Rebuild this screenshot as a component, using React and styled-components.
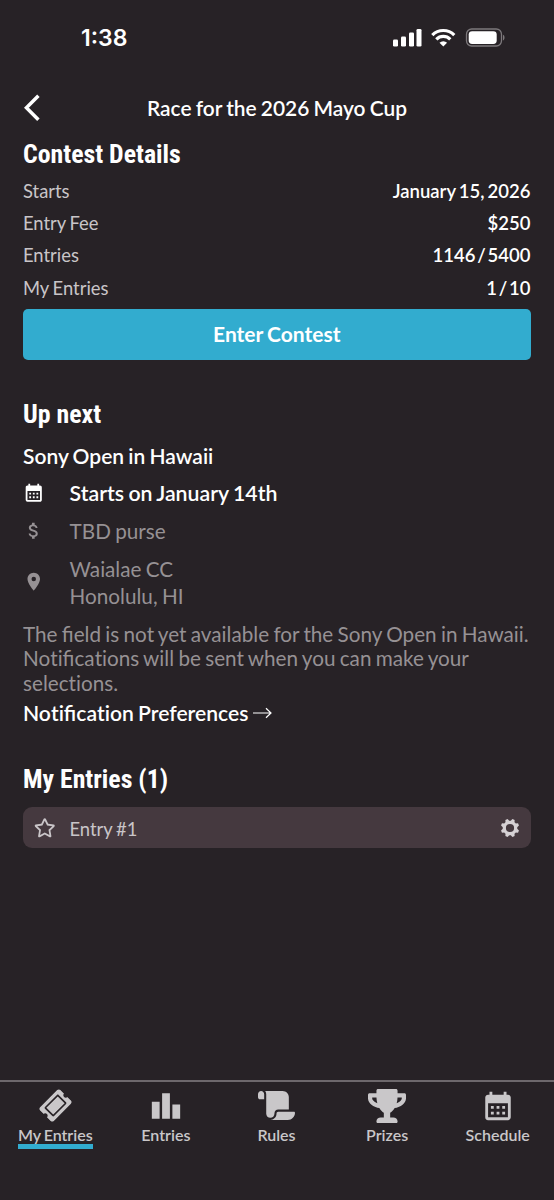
import React from 'react'
import styled, { createGlobalStyle } from 'styled-components'
import { MdCalendarMonth, MdAttachMoney, MdLocationOn, MdLeaderboard } from 'react-icons/md'
import { FaTicketAlt, FaTrophy, FaRegStar } from 'react-icons/fa'
import { FaScroll } from 'react-icons/fa6'

const GlobalStyle = createGlobalStyle`
  * {
    box-sizing: border-box;
  }
  body {
    margin: 0;
    background-color: #272226;
  }
`
const Container = styled.div`
  width: 100%;
  height: 1200px;
  display: flex;
  flex-direction: column;
  overflow: hidden;
  background-color: #272226;
  color: white;
  font-family: Lato, sans-serif;
  font-weight: 600;
  word-spacing: -1px;
`
const StatusBar = styled.div`
  height: 79px;
  padding: 5px 49px 10px 81px;
  display: flex;
  align-items: center;
  justify-content: space-between;
`
const Clock = styled.span`
  padding-top: 2px;
  font-family: Inter, sans-serif;
  font-size: 23px;
  font-weight: 600;
`
const Header = styled.div`
  height: 59px;
  padding: 0px 24px 2px;
  display: grid;
  grid-template-columns: 30px 1fr 30px;
  align-items: center;
`
const Title = styled.span`
  font-size: 20.9px;
  text-align: center;
`
const Content = styled.div`
  flex: 1;
  padding: 0px 23.5px 0px 23px;
`
const Heading = styled.h2`
  height: 32px;
  margin: 0px;
  font-family: Roboto, sans-serif;
  font-size: 25.8px;
  font-weight: 700;
  font-stretch: 75%;
  line-height: 33px;
  word-spacing: 0px;
`
const Detail = styled.div`
  height: 32.2px;
  display: flex;
  align-items: center;
  justify-content: space-between;
  font-size: 18.4px;
`
const Label = styled.span`
  color: #c9c5c8;
  font-weight: 400;
`
const Value = styled.span`
  font-size: 18.5px;
  word-spacing: ${props => props.$tight ? -2.8 : -1.5}px;
`
const Details = styled.div`
  padding-top: 5px;
  margin-bottom: 5px;
`
const Button = styled.button`
  display: block;
  width: 100%;
  height: 51px;
  margin-bottom: 38px;
  padding: 0px 0px 2px;
  border: none;
  border-radius: 5px;
  background-color: #32accf;
  color: white;
  font-family: inherit;
  font-size: 21px;
  font-weight: 700;
  word-spacing: inherit;
`
const EventName = styled.div`
  height: 45px;
  font-size: 21px;
  line-height: 51px;
`
const Info = styled.div`
  height: ${props => props.$tall ? 65 : 38}px;
  display: grid;
  grid-template-columns: 46.6px 1fr;
  align-items: center;
  color: ${props => props.$active ? 'white' : '#969194'};
  font-size: ${props => props.$active ? 21.3 : 20.7}px;
  font-weight: ${props => props.$active ? 600 : 400};
  line-height: 27.4px;
  svg {
    margin-bottom: 2.5px;
  }
`
const Notice = styled.p`
  margin: 6px -10px 0px 0px;
  color: #969194;
  font-size: 20.7px;
  font-weight: 400;
  line-height: 24.6px;
`
const NoLigature = styled.span`
  font-variant-ligatures: none;
`
const TextLink = styled.div`
  height: 34px;
  margin-bottom: 33px;
  display: flex;
  align-items: center;
  gap: 5px;
  font-size: 21.1px;
`
const Entry = styled.div`
  height: 41px;
  margin-top: 12px;
  padding: 2px 10.5px 0px 11px;
  display: grid;
  grid-template-columns: 35.5px 1fr 20px;
  align-items: center;
  border-radius: 9px;
  background-color: #45393f;
  color: #c9c5c8;
  font-size: 18.4px;
  font-weight: 400;
`
const EntryName = styled.span`
  padding-top: 2px;
`
const TabBar = styled.div`
  height: 120px;
  padding-right: 1px;
  display: grid;
  grid-template-columns: repeat(5, 1fr);
  justify-items: center;
  align-items: start;
  border-top: 2px solid #6d686c;
`
const Tab = styled.div`
  display: flex;
  flex-direction: column;
  align-items: center;
  color: #c9c7c9;
  font-size: 16px;
  line-height: 18px;
  border-bottom: 5px solid ${props => props.$active ? '#32accf' : 'transparent'};
`
const TabIcon = styled.div`
  height: 44px;
  padding-top: 3px;
  display: flex;
  align-items: center;
`
const Ticket = styled(FaTicketAlt)`
  transform: rotate(-45deg);
`

const StatusIcons = () => (
  <svg width="113" height="20" viewBox="0 0 113 20" fill="white">
    <rect x="1" y="12.5" width="5" height="7" rx="1.3" />
    <rect x="9" y="9.5" width="5" height="10" rx="1.3" />
    <rect x="17" y="5.5" width="5" height="14" rx="1.3" />
    <rect x="24.5" y="2" width="5" height="17.5" rx="1.3" />
    <g fill="none" stroke="white" strokeWidth="3.2">
      <path d="M40.3 8.1A15.5 15.5 0 0 1 62.3 8.1" />
      <path d="M44.3 12.3A9.8 9.8 0 0 1 58.3 12.3" />
    </g>
    <path d="M51.3 19.5L47.5 15.8A5.4 5.4 0 0 1 55.1 15.8Z" />
    <rect x="74.5" y="2" width="35" height="17" rx="5.2" fill="none" stroke="#7d797c" strokeWidth="1.3" />
    <rect x="76.7" y="4.2" width="28" height="12.7" rx="3.4" />
    <path d="M111 7.8c2 .6 2 5 0 5.6z" fill="#7d797c" />
  </svg>
)

const BackIcon = () => (
  <svg width="17" height="28" viewBox="0 0 17 28" fill="none" stroke="white" strokeWidth="3.5">
    <path d="M14.4 1.8L2.4 13.8L14.4 25.8" />
  </svg>
)

const ArrowIcon = () => (
  <svg width="20" height="12" viewBox="0 0 20 12" fill="none" stroke="white" strokeWidth="1.2">
    <path d="M0 6H18M13 1.2L18 6L13 10.8" />
  </svg>
)

const GearIcon = () => (
  <svg width="20" height="20" viewBox="-10 -10 20 20" fill="#d6d2d5">
    <circle r="5.7" fill="none" stroke="#d6d2d5" strokeWidth="3.2" />
    {[22.5, 67.5, 112.5, 157.5, 202.5, 247.5, 292.5, 337.5].map(angle => (
      <path key={angle} d="M-2.1 -6.6L-1.2 -9.2H1.2L2.1 -6.6Z" transform={`rotate(${angle})`} />
    ))}
  </svg>
)

const details = [
  { label: 'Starts', value: 'January 15, 2026' },
  { label: 'Entry Fee', value: '$250' },
  { label: 'Entries', value: '1146 / 5400', tight: true },
  { label: 'My Entries', value: '1 / 10', tight: true },
]

const tabs = [
  { name: 'My Entries', icon: <Ticket size={29} />, active: true },
  { name: 'Entries', icon: <MdLeaderboard size={34} /> },
  { name: 'Rules', icon: <FaScroll size={37} /> },
  { name: 'Prizes', icon: <FaTrophy size={38} /> },
  { name: 'Schedule', icon: <MdCalendarMonth size={34} /> },
]

const App = () => {
  return (
    <Container>
      <GlobalStyle />
      <StatusBar>
        <Clock>1:38</Clock>
        <StatusIcons />
      </StatusBar>
      <Header>
        <BackIcon />
        <Title>Race for the 2026 Mayo Cup</Title>
      </Header>
      <Content>
        <Heading>Contest Details</Heading>
        <Details>
          {details.map(item => (
            <Detail key={item.label}>
              <Label>{item.label}</Label>
              <Value $tight={item.tight}>{item.value}</Value>
            </Detail>
          ))}
        </Details>
        <Button>Enter Contest</Button>
        <Heading>Up next</Heading>
        <EventName>Sony Open in Hawaii</EventName>
        <Info $active>
          <MdCalendarMonth size={21.5} />
          <span>Starts on January 14th</span>
        </Info>
        <Info>
          <MdAttachMoney size={21.5} />
          <span>TBD purse</span>
        </Info>
        <Info $tall>
          <MdLocationOn size={21.5} />
          <span>Waialae CC<br />Honolulu, HI</span>
        </Info>
        <Notice>
          The field is not yet available for the Sony Open in Hawaii.<br />
          No<NoLigature>ti</NoLigature>fica<NoLigature>ti</NoLigature>ons will be sent when you can make your<br />
          selec<NoLigature>ti</NoLigature>ons.
        </Notice>
        <TextLink>
          <span>No<NoLigature>ti</NoLigature>fica<NoLigature>ti</NoLigature>on Preferences</span>
          <ArrowIcon />
        </TextLink>
        <Heading>My Entries (1)</Heading>
        <Entry>
          <FaRegStar size={21.5} />
          <EntryName>Entry #1</EntryName>
          <GearIcon />
        </Entry>
      </Content>
      <TabBar>
        {tabs.map(tab => (
          <Tab key={tab.name} $active={tab.active}>
            <TabIcon>{tab.icon}</TabIcon>
            {tab.name}
          </Tab>
        ))}
      </TabBar>
    </Container>
  )
}

export default App
